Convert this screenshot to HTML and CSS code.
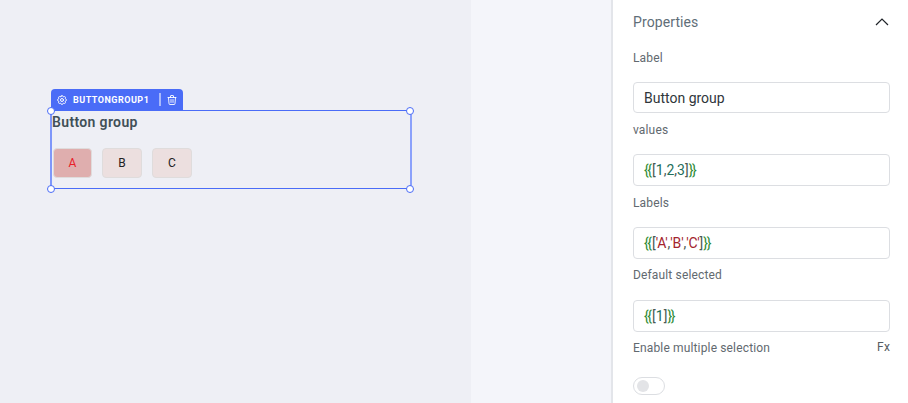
FILE: index.html
```html
<!DOCTYPE html>
<html>
<head>
  <meta charset="utf-8">
  <title>Button group</title>
  <link rel="stylesheet" href="styles.css">
</head>
<body>
  <div class="app">
    <!-- canvas -->
    <div class="canvas">
      <div class="widget">
        <div class="widget-bar">
          <svg class="bar-icon" viewBox="0 0 24 24" fill="none" stroke="#fff" stroke-width="2" stroke-linecap="round" stroke-linejoin="round">
            <path d="M10.3 4.3c.4-1.8 3-1.8 3.4 0a1.7 1.7 0 0 0 2.6 1.1c1.5-.9 3.3.8 2.4 2.4a1.7 1.7 0 0 0 1 2.5c1.8.4 1.8 3 0 3.4a1.7 1.7 0 0 0-1 2.6c.9 1.5-.9 3.3-2.4 2.4a1.7 1.7 0 0 0-2.6 1c-.4 1.8-3 1.8-3.4 0a1.7 1.7 0 0 0-2.6-1c-1.5.9-3.3-.9-2.4-2.4a1.7 1.7 0 0 0-1-2.6c-1.8-.4-1.8-3 0-3.4a1.7 1.7 0 0 0 1-2.5c-.9-1.6.9-3.3 2.4-2.4a1.7 1.7 0 0 0 2.6-1.1z"/>
            <circle cx="12" cy="12" r="3"/>
          </svg>
          <span class="bar-name">BUTTONGROUP1</span>
          <span class="bar-sep"></span>
          <svg class="bar-icon" viewBox="0 0 24 24" fill="none" stroke="#fff" stroke-width="1.8" stroke-linecap="round" stroke-linejoin="round">
            <path d="M4 7h16"/>
            <path d="M10 11v6"/>
            <path d="M14 11v6"/>
            <path d="M5 7l1 12a2 2 0 0 0 2 2h8a2 2 0 0 0 2-2l1-12"/>
            <path d="M9 7V4a1 1 0 0 1 1-1h4a1 1 0 0 1 1 1v3"/>
          </svg>
        </div>
        <div class="widget-box">
          <span class="handle handle-tl"></span>
          <span class="handle handle-tr"></span>
          <span class="handle handle-bl"></span>
          <span class="handle handle-br"></span>
          <div class="group-title">Button group</div>
          <div class="group-buttons">
            <div class="group-btn active">A</div>
            <div class="group-btn">B</div>
            <div class="group-btn">C</div>
          </div>
        </div>
      </div>
    </div>

    <div class="gutter"></div>

    <!-- properties -->
    <div class="panel">
      <div class="panel-head">
        <span>Properties</span>
        <svg class="chevron" viewBox="0 0 14 8" fill="none" stroke="#1f2328" stroke-width="1.2">
          <path d="M1 7l6-6 6 6"/>
        </svg>
      </div>

      <div class="field-label">Label</div>
      <div class="field-input plain">Button group</div>

      <div class="field-label">values</div>
      <div class="field-input"><span class="c-brace">{{</span><span class="c-bracket">[</span><span class="c-num">1</span><span class="c-bracket">,</span><span class="c-num">2</span><span class="c-bracket">,</span><span class="c-num">3</span><span class="c-bracket">]</span><span class="c-brace">}}</span></div>

      <div class="field-label">Labels</div>
      <div class="field-input"><span class="c-brace">{{</span><span class="c-bracket">[</span><span class="c-str">'A'</span><span class="c-bracket">,</span><span class="c-str">'B'</span><span class="c-bracket">,</span><span class="c-str">'C'</span><span class="c-bracket">]</span><span class="c-brace">}}</span></div>

      <div class="field-label">Default selected</div>
      <div class="field-input"><span class="c-brace">{{</span><span class="c-bracket">[</span><span class="c-num">1</span><span class="c-bracket">]</span><span class="c-brace">}}</span></div>

      <div class="field-label toggle-label">
        <span>Enable multiple selection</span>
        <span class="fx">Fx</span>
      </div>
      <div class="toggle"><span class="toggle-knob"></span></div>
    </div>
  </div>
</body>
</html>
```

FILE: styles.css
```css
html, body {
  margin: 0;
  height: 100%;
  overflow: hidden;
}

body {
  font-family: "Roboto", "Liberation Sans", sans-serif;
  background: #fff;
}

.app {
  display: flex;
  height: 403px;
}

.canvas {
  position: relative;
  width: 471px;
  background: #eeeff5;
}

.gutter {
  width: 140px;
  background: #f4f5fa;
}

.widget {
  position: absolute;
  left: 50px;
  top: 89px;
  width: 362px;
}

.widget-bar {
  display: flex;
  align-items: center;
  width: 132px;
  height: 21px;
  margin-left: 1px;
  box-sizing: border-box;
  padding: 0 5px 0 5px;
  background: #4a6cf7;
  border-radius: 4px 4px 0 0;
  color: #fff;
}

.bar-icon {
  width: 12px;
  height: 12px;
  flex: none;
}

.bar-name {
  margin-left: 5px;
  font-size: 9px;
  font-weight: 700;
  letter-spacing: 0.5px;
}

.bar-sep {
  width: 2px;
  height: 13px;
  margin: 0 5px 0 auto;
  background: #a9b9fb;
}

.widget-box {
  position: relative;
  height: 79px;
  box-sizing: border-box;
  border: 1px solid #4a6cf7;
  border-left-width: 2px;
  border-left-color: #7f97fa;
  border-right-width: 2px;
  border-right-color: #8ba1fb;
}

.handle {
  position: absolute;
  width: 8px;
  height: 8px;
  box-sizing: border-box;
  background: #fff;
  border: 1px solid #4a6cf7;
  border-radius: 50%;
}

.handle-tl { left: -5px; top: -4px; }
.handle-tr { right: -4px; top: -4px; }
.handle-bl { left: -5px; bottom: -5px; }
.handle-br { right: -4px; bottom: -5px; }

.group-title {
  margin-top: 2px;
  font-size: 14px;
  font-weight: 600;
  line-height: 19px;
  letter-spacing: 0.35px;
  color: #414f57;
}

.group-buttons {
  display: flex;
  gap: 10px;
  margin: 16px 0 0 1px;
}

.group-btn {
  width: 40px;
  height: 30px;
  box-sizing: border-box;
  display: flex;
  align-items: center;
  justify-content: center;
  background: #ecdfdf;
  border: 1px solid #dfdcdc;
  border-radius: 4px;
  font-size: 12px;
  color: #222;
}

.group-btn.active {
  width: 39px;
  background: #dfaeae;
  color: #e8202a;
}

.panel {
  flex: 1;
  box-sizing: border-box;
  padding: 13px 18px 0 20px;
  background: #fff;
  border-left: 2px solid #e3e5ea;
}

.panel-head {
  display: flex;
  align-items: center;
  justify-content: space-between;
  height: 17px;
  margin-bottom: 20px;
  font-size: 14px;
  letter-spacing: 0.1px;
  color: #5f6e78;
}

.chevron {
  width: 14px;
  height: 8px;
  margin-right: 1px;
}

.field-label {
  height: 17px;
  font-size: 12px;
  line-height: 17px;
  letter-spacing: 0.15px;
  color: #62696f;
}

.toggle-label {
  display: flex;
  justify-content: space-between;
}

.fx {
  margin-top: -1px;
  color: #555c62;
}

.field-input {
  height: 32px;
  box-sizing: border-box;
  margin: 15.4px 0 8.3px;
  padding: 0 10px;
  display: flex;
  align-items: center;
  background: #fff;
  border: 1px solid #dcdee2;
  border-radius: 4px;
  font-size: 14px;
  white-space: pre;
}

.field-input.plain {
  height: 31px;
  margin-bottom: 8.6px;
  color: #30363b;
}

.c-brace {
  color: #2d8a34;
  letter-spacing: -1.4px;
  margin-right: 1.4px;
}

.c-bracket { color: #4c5a55; }
.c-num { color: #1f6f5c; }
.c-str { color: #a3242c; letter-spacing: -0.2px; }

.toggle {
  width: 32px;
  height: 18px;
  margin-top: 20px;
  box-sizing: border-box;
  padding: 2px 3px;
  background: #fff;
  border: 1px solid #dcdee2;
  border-radius: 9px;
}

.toggle-knob {
  display: block;
  width: 12px;
  height: 12px;
  background: #e3e4e7;
  border-radius: 50%;
}
```
